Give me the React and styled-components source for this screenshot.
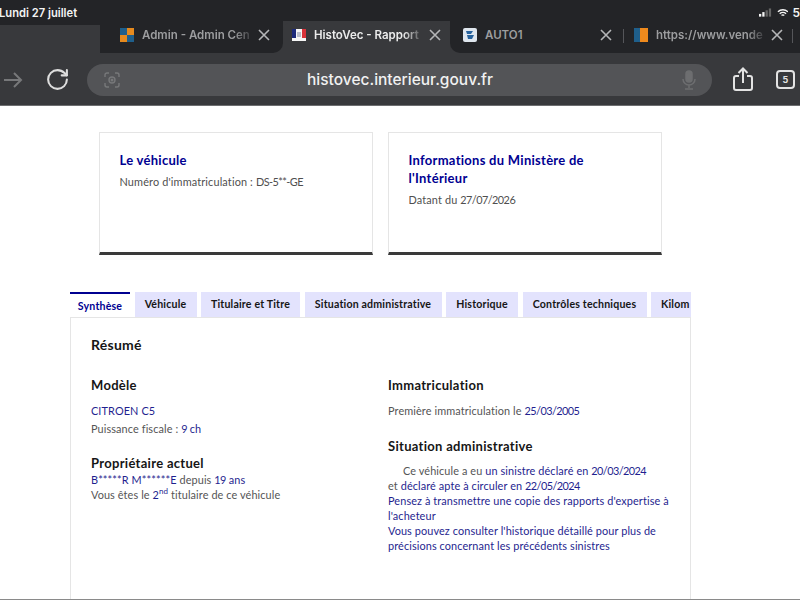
import React from "react";
import styled, { createGlobalStyle } from "styled-components";
import { RotateCw } from "lucide-react";

const Global = createGlobalStyle`
  html, body { margin: 0; padding: 0; background: #fff; }
  body { width: 800px; height: 600px; overflow: hidden; font-family: "Lato", "Noto Sans", sans-serif; }
  * { box-sizing: border-box; }
`;

const Screen = styled.div`
  width: 800px; height: 600px; overflow: hidden; display: flex; flex-direction: column; position: relative;
`;
const StatusBar = styled.div`
  height: 21px; flex: none; background: #232427; color: #f4f4f4; display: flex; align-items: flex-start; justify-content: space-between;
  font: 600 11.2px/14px "Inter", sans-serif; padding-top: 6px; overflow: visible; position: relative; z-index: 1;
`;
const Clock = styled.span` margin-left: -1px; `;
const StatusRight = styled.div` display: flex; align-items: center; gap: 4px; width: 41px; overflow: hidden; flex: none; white-space: nowrap; font-size: 12px; `;
const TabStrip = styled.div`
  height: 32px; flex: none; display: flex; background: #38393c;
`;
const StripLead = styled.div`
  width: 100px; flex: none; background: linear-gradient(180deg, #232427 4px, #38393c 4px);
`;
const BrowserTab = styled.div`
  width: ${p => p.$w}px; flex: ${p => (p.$grow ? 1 : "none")}; height: 32px; display: flex; align-items: center; position: relative;
  padding: 0 0 4px ${p => p.$pad}px;
  background: ${p => (p.$active ? "#38393c" : "#232427")};
  border-radius: ${p => p.$radius || "0"};
  color: ${p => (p.$active ? "#ececec" : "#9c9d9f")};
  font: 600 11.5px "Inter", sans-serif;
`;
const TabIcon = styled.svg` width: 14px; height: 14px; flex: none; margin-right: 8px; `;
const TabTitle = styled.span`
  white-space: nowrap; flex: none;
  -webkit-mask-image: ${p => (p.$fade ? "linear-gradient(90deg, #000 85%, rgba(0,0,0,.25))" : "none")};
  mask-image: ${p => (p.$fade ? "linear-gradient(90deg, #000 85%, rgba(0,0,0,.25))" : "none")};
`;
const CloseBtn = styled.svg` width: 12px; height: 12px; position: absolute; top: 8px; left: ${p => p.$x}px; stroke: #b5b6b8; stroke-width: 1.6; fill: none; `;
const Sep = styled.div` position: absolute; top: 8px; left: ${p => p.$x}px; width: 1px; height: 14px; background: #55565a; `;
const Toolbar = styled.div`
  height: 53px; flex: none; background: #38393c; display: flex; align-items: center; border-bottom: 1px solid #6d6e70; padding-top: 1px;
`;
const NavIcons = styled.div` width: 87px; flex: none; display: flex; align-items: center; padding-left: 3px; gap: 22px; `;
const Omnibox = styled.div`
  width: 625px; height: 32px; flex: none; border-radius: 16px; background: #535457; display: flex; align-items: center; justify-content: space-between; padding: 0 16px 0 17px; position: relative;
`;
const Url = styled.span`
  position: absolute; left: 220px; top: 5px; font: 500 15.5px/22px "Inter", sans-serif; color: #f1f1f1; letter-spacing: 0;
`;
const ToolRight = styled.div` flex: 1; display: flex; align-items: center; padding-left: 21px; gap: 23px; `;
const Count = styled.div`
  width: 19px; height: 19px; border: 2px solid #e3e3e3; border-radius: 4px; color: #e3e3e3; font: 700 9px/15px "Inter", sans-serif; text-align: center;
`;

const Page = styled.main`
  flex: 1; display: flex; flex-direction: column; background: #fff; padding: 26px 0 0 70px; color: #4a4a4a;
  border-bottom: 1px solid #8a8a8a;
`;
const Cards = styled.div` display: flex; gap: 15px; margin-left: 29px; margin-bottom: 37px; `;
const Card = styled.section`
  width: 274px; height: 123px; border: 1px solid #e5e5e5; border-bottom: 3px solid #3a3a3a; padding: 18px 19.5px;
`;
const CardTitle = styled.h2` margin: 0 0 4px; font: 700 13px/18px "Lato", sans-serif; color: #000091; letter-spacing: .28px; `;
const CardText = styled.p` margin: 0; font: 400 10.9px/17px "Lato", sans-serif; color: #4f4f4f; letter-spacing: .14px; `;
const Tabs = styled.nav` width: 621px; height: 25px; overflow: hidden; display: flex; gap: 4.5px; flex: none; `;
const PanelTab = styled.div`
  flex: none; width: ${p => p.$w}px; height: 25px; display: flex; align-items: center; justify-content: ${p => (p.$start ? "flex-start" : "center")};
  padding: 0 0 ${p => (p.$active ? 0 : 1)}px ${p => (p.$start ? 10 : 0)}px; white-space: nowrap;
  font: 700 10.6px "Lato", sans-serif; letter-spacing: .18px;
  background: ${p => (p.$active ? "#fff" : "#e3e3fd")};
  color: ${p => (p.$active ? "#000091" : "#161616")};
  border-top: ${p => (p.$active ? "2px solid #000091" : "0")};
`;
const Panel = styled.section`
  width: 621px; flex: 1; border: 1px solid #e5e5e5; border-bottom: 0; padding: 18px 10px 0 20px; min-height: 0;
`;
const Resume = styled.h3` margin: 0 0 22px; font: 700 14px/18px "Lato", sans-serif; color: #161616; letter-spacing: .25px; `;
const Columns = styled.div` display: grid; grid-template-columns: 297px 1fr; `;
const Column = styled.div` display: flex; flex-direction: column; `;
const Heading = styled.h4` margin: ${p => p.$top || 0}px 0 ${p => p.$bottom || 0}px; font: 700 13px/18px "Lato", sans-serif; color: #161616; letter-spacing: .3px; `;
const Line = styled.p` margin: 0; font: 400 10.9px/${p => p.$lh || 15}px "Lato", sans-serif; color: #555; letter-spacing: .1px; text-indent: ${p => p.$indent || 0}px; `;
const Val = styled.span` color: #1f1f8f; `;
const Digits = styled.span` letter-spacing: -.56px; `;
const Sup = styled.sup` font-size: 8px; line-height: 0; color: #1f1f8f; `;

const Close = ({ x }) => (
  <CloseBtn $x={x} viewBox="0 0 12 12"><path d="M1 1l10 10M11 1L1 11" /></CloseBtn>
);

export default function App() {
  return (
    <Screen>
      <Global />
      <StatusBar>
        <Clock>Lundi 27 juillet</Clock>
        <StatusRight>
          <svg width="15" height="10" viewBox="0 0 15 10">
            <rect x="0" y="6" width="2.5" height="3" fill="#f4f4f4" /><rect x="3.6" y="4" width="2.5" height="5" fill="#f4f4f4" />
            <rect x="7.2" y="2" width="2.5" height="7" fill="#666" /><rect x="10.8" y="0" width="2.5" height="9" fill="#666" />
          </svg>
          <svg width="13" height="10" viewBox="0 0 13 10" fill="none" stroke="#f4f4f4" strokeWidth="1.5">
            <path d="M1 3.6a8 8 0 0 1 11 0" /><path d="M3 5.8a5 5 0 0 1 7 0" /><path d="M5 7.7a2 2 0 0 1 3 0" />
          </svg>
          <span>5</span>
        </StatusRight>
      </StatusBar>
      <TabStrip>
        <StripLead />
        <BrowserTab $w={183} $pad={20} $radius="0 0 10px 0">
          <TabIcon viewBox="0 0 14 14">
            <rect x="0" y="7" width="7" height="7" fill="#e58a1e" /><rect x="7" y="0" width="7" height="7" fill="#e58a1e" />
            <rect x="0" y="0" width="7" height="7" fill="#1f5f8b" /><rect x="7" y="7" width="7" height="7" fill="#1f5f8b" />
          </TabIcon>
          <TabTitle $fade>Admin - Admin Cen</TabTitle>
          <Close x={158} />
        </BrowserTab>
        <BrowserTab $w={167} $pad={9} $active $radius="10px 10px 0 0">
          <TabIcon viewBox="0 0 14 14">
            <rect width="14" height="12" y="1" fill="#f6f6f6" /><rect width="4" height="9" y="1" fill="#1d2a7a" /><rect width="4" height="9" x="10" y="1" fill="#d8333a" /><rect x="5" y="4" width="4" height="5" fill="#b9bcc8" />
          </TabIcon>
          <TabTitle $fade>HistoVec - Rapport</TabTitle>
          <Close x={146} />
        </BrowserTab>
        <BrowserTab $w={172} $pad={13} $radius="0 0 0 10px">
          <TabIcon viewBox="0 0 14 14">
            <rect width="14" height="14" rx="2" fill="#dfe6ee" /><path d="M3 3h7l-2 3H4zM4 7h7l-2 4H5z" fill="#26619c" />
          </TabIcon>
          <TabTitle>AUTO1</TabTitle>
          <Close x={150} />
        </BrowserTab>
        <BrowserTab $grow $pad={12}>
          <Sep $x={1} />
          <TabIcon viewBox="0 0 14 14">
            <rect width="6" height="14" fill="#1f5f8b" /><rect x="6" width="8" height="14" fill="#ee8a1d" />
          </TabIcon>
          <TabTitle $fade>https://www.vende</TabTitle>
          <Close x={149} />
          <Sep $x={170} />
        </BrowserTab>
      </TabStrip>
      <Toolbar>
        <NavIcons>
          <svg width="20" height="20" viewBox="0 0 20 20" fill="none" stroke="#77787a" strokeWidth="2"><path d="M1 10h17M11 3l7 7-7 7" /></svg>
          <RotateCw size={25} color="#dedede" strokeWidth={2} />
        </NavIcons>
        <Omnibox>
          <svg width="16" height="16" viewBox="0 0 16 16" fill="none" stroke="#77787a" strokeWidth="1.4"><path d="M1 5V3a2 2 0 0 1 2-2h2M11 1h2a2 2 0 0 1 2 2v2M1 11v2a2 2 0 0 0 2 2h2M15 11v2a2 2 0 0 1-2 2h-2" /><circle cx="8" cy="8" r="3" /><circle cx="8" cy="8" r=".8" fill="#77787a" /></svg>
          <Url>histovec.interieur.gouv.fr</Url>
          <svg width="14" height="20" viewBox="0 0 14 20" fill="none" stroke="#6d6e70" strokeWidth="1.5"><rect x="4" y="1" width="6" height="11" rx="3" fill="#6d6e70" /><path d="M1 9a6 6 0 0 0 12 0M7 15v3M3 19h8" /></svg>
        </Omnibox>
        <ToolRight>
          <svg width="20" height="25" viewBox="0 0 20 25" fill="none" stroke="#e3e3e3" strokeWidth="2"><path d="M6 9H3a2 2 0 0 0-2 2v10a2 2 0 0 0 2 2h14a2 2 0 0 0 2-2V11a2 2 0 0 0-2-2h-3" /><path d="M10 16V2M5.5 6L10 1.5 14.5 6" /></svg>
          <Count>5</Count>
        </ToolRight>
      </Toolbar>
      <Page>
        <Cards>
          <Card>
            <CardTitle>Le véhicule</CardTitle>
            <CardText>Numéro d'immatriculation : <Digits>DS-5**-GE</Digits></CardText>
          </Card>
          <Card>
            <CardTitle>Informations du Ministère de l'Intérieur</CardTitle>
            <CardText>Datant du <Digits>27/07/2026</Digits></CardText>
          </Card>
        </Cards>
        <Tabs>
          <PanelTab $active $w={60}>Synthèse</PanelTab>
          <PanelTab $w={62}>Véhicule</PanelTab>
          <PanelTab $w={99}>Titulaire et Titre</PanelTab>
          <PanelTab $w={137}>Situation administrative</PanelTab>
          <PanelTab $w={72}>Historique</PanelTab>
          <PanelTab $w={124}>Contrôles techniques</PanelTab>
          <PanelTab $w={40} $start>Kilom</PanelTab>
        </Tabs>
        <Panel>
          <Resume>Résumé</Resume>
          <Columns>
            <Column>
              <Heading $bottom={8}>Modèle</Heading>
              <Line $lh={17}><Val>CITROEN C5</Val></Line>
              <Line $lh={19}>Puissance fiscale : <Val><Digits>9</Digits> ch</Val></Line>
              <Heading $top={16}>Propriétaire actuel</Heading>
              <Line><Val>B*****R M******E</Val> depuis <Val><Digits>19</Digits> ans</Val></Line>
              <Line>Vous êtes le <Val>2</Val><Sup>nd</Sup> titulaire de ce véhicule</Line>
            </Column>
            <Column>
              <Heading $bottom={8}>Immatriculation</Heading>
              <Line $lh={17}>Première immatriculation le <Val><Digits>25/03/2005</Digits></Val></Line>
              <Heading $top={18} $bottom={8}>Situation administrative</Heading>
              <Line $indent={15}>Ce véhicule a eu <Val>un sinistre déclaré en <Digits>20/03/2024</Digits></Val></Line>
              <Line>et <Val>déclaré apte à circuler en <Digits>22/05/2024</Digits></Val></Line>
              <Line><Val>Pensez à transmettre une copie des rapports d'expertise à l'acheteur</Val></Line>
              <Line><Val>Vous pouvez consulter l'historique détaillé pour plus de précisions concernant les précédents sinistres</Val></Line>
            </Column>
          </Columns>
        </Panel>
      </Page>
    </Screen>
  );
}
